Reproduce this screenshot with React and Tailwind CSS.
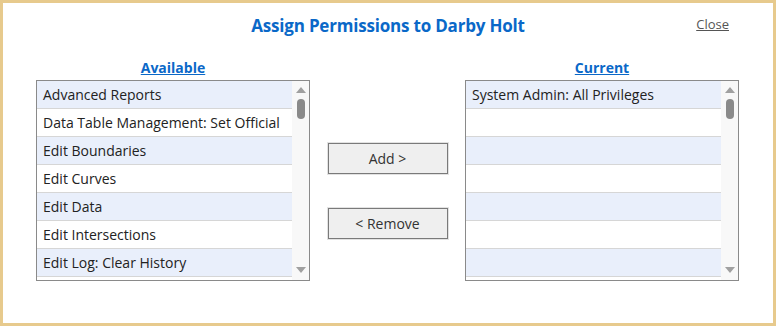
import React from "react";

const available = [
  "Advanced Reports",
  "Data Table Management: Set Official",
  "Edit Boundaries",
  "Edit Curves",
  "Edit Data",
  "Edit Intersections",
  "Edit Log: Clear History",
  "",
];
const current = ["System Admin: All Privileges", "", "", "", "", "", "", ""];

function ListBox({ items }) {
  return (
    <div className="flex h-[201px] w-[274px] border border-[#8a8a8a] bg-white overflow-hidden">
      <div className="flex-1 flex flex-col overflow-hidden">
        {items.map((t, i) => (
          <div
            key={i}
            className={`h-[28px] shrink-0 border-b border-[#d6d6d6] pl-[6px] flex items-center text-[14px] text-[#222] whitespace-nowrap ${
              i % 2 === 0 ? "bg-[#e9effb]" : "bg-white"
            }`}
          >
            {t}
          </div>
        ))}
      </div>
      <div className="w-[17px] shrink-0 bg-[#f8f8f8] flex flex-col items-center">
        <svg width="10" height="6" viewBox="0 0 10 6" className="mt-[6px]">
          <polygon points="5,0 10,6 0,6" fill="#a0a0a0" />
        </svg>
        <div className="mt-[6px] w-[8px] h-[20px] rounded-full bg-[#8a8a8a]" />
        <div className="flex-1" />
        <svg width="10" height="6" viewBox="0 0 10 6" className="mb-[7px]">
          <polygon points="0,0 10,0 5,6" fill="#a0a0a0" />
        </svg>
      </div>
    </div>
  );
}

export default function App() {
  return (
    <div
      className="w-[776px] h-[326px] border-[3px] border-[#e7ca8d] bg-white flex flex-col"
      style={{ fontFamily: '"Open Sans", "Noto Sans", sans-serif' }}
    >
      <div className="grid grid-cols-[1fr_auto_1fr] items-start pt-[11px] h-[55px]">
        <div />
        <div className="text-[17px] tracking-[-0.2px] font-bold text-[#0a68c8] leading-[24px]">
          Assign Permissions to Darby Holt
        </div>
        <div className="flex justify-end pr-[44px] pt-[1px]">
          <span className="text-[13px] text-[#555] underline leading-[18px]">Close</span>
        </div>
      </div>
      <div className="flex pl-[33px]">
        <div className="flex flex-col items-center">
          <div className="text-[14px] font-bold text-[#0a68c8] underline leading-[20px] mb-[2px]">
            Available
          </div>
          <ListBox items={available} />
        </div>
        <div className="w-[155px] flex flex-col items-center pt-[85px] gap-[34px]">
          <button className="w-[120px] h-[31px] bg-[#efefef] border border-[#7a7a7a] outline outline-1 outline-[#e2e2e2] text-[14px] text-[#333]">
            Add &gt;
          </button>
          <button className="w-[120px] h-[31px] bg-[#efefef] border border-[#7a7a7a] outline outline-1 outline-[#e2e2e2] text-[14px] text-[#333]">
            &lt; Remove
          </button>
        </div>
        <div className="flex flex-col items-center">
          <div className="text-[14px] font-bold text-[#0a68c8] underline leading-[20px] mb-[2px]">
            Current
          </div>
          <ListBox items={current} />
        </div>
      </div>
    </div>
  );
}
